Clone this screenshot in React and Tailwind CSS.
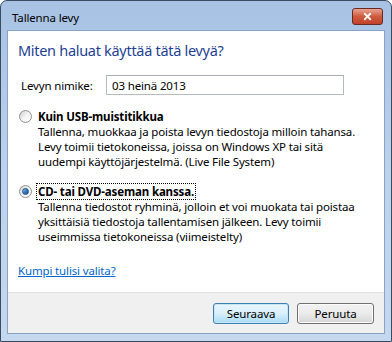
import { X } from 'lucide-react'

const font = { fontFamily: '"Noto Sans", "Open Sans", sans-serif' }

function Radio({ checked }) {
  return (
    <span className="mt-[1px] flex h-[13px] w-[13px] shrink-0 items-center justify-center rounded-full border border-[#8e8f8f] bg-gradient-to-br from-[#d0d0d0] via-[#f4f4f4] to-[#ffffff]">
      {checked && (
        <span className="h-[7px] w-[7px] rounded-full border border-[#1b4f8a] bg-gradient-to-br from-[#8fc3f2] via-[#3979c4] to-[#1a4f8e]" />
      )}
    </span>
  )
}

function Option({ checked, title, lines }) {
  return (
    <div className="flex gap-[5px]">
      <Radio checked={checked} />
      <div className="flex flex-col whitespace-nowrap">
        <span className={`self-start px-[1px] font-bold ${checked ? 'outline outline-1 outline-dotted outline-black' : ''}`}>
          {title}
        </span>
        {lines.map((l) => (
          <span key={l} className="px-[1px]">{l}</span>
        ))}
      </div>
    </div>
  )
}

export default function App() {
  return (
    <div className="h-[342px] w-[392px] bg-white" style={font}>
      <div className="flex h-full w-full flex-col rounded-t-[7px] border border-[#3b4b60] bg-gradient-to-b from-[#a7c2e3] via-[#bcd2ed] to-[#c4d8ef]">
        {/* title bar */}
        <div className="flex h-[29px] shrink-0 items-center justify-between pl-[11px] pr-[8px]">
          <span className="pt-[5px] text-[11.5px] tracking-[-0.15px] text-black">Tallenna levy</span>
          <div className="mt-[1px] flex h-[17px] w-[31px] items-center justify-center rounded-[3px] border border-[#6b2a1f] bg-gradient-to-b from-[#e8a493] via-[#cf5a3e] to-[#c1412a]">
            <X size={11} strokeWidth={4} className="text-white" />
          </div>
        </div>

        {/* client area */}
        <div className="mx-[6px] mb-[7px] flex flex-1 flex-col border border-[#8ba3c2] text-[11.5px] leading-[15px] tracking-[-0.15px] text-black">
          <div className="flex flex-1 flex-col bg-white pl-[10px] pr-[10px]">
            <h1 className="mt-[8px] text-[14.5px] leading-[22px] tracking-[-0.3px] text-[#1e3f94]">Miten haluat käyttää tätä levyä?</h1>

            <div className="mt-[14px] flex items-center">
              <span className="w-[88px] pl-[3px]">Levyn nimike:</span>
              <div className="flex h-[20px] w-[238px] items-center border border-[#b5b9c0] border-t-[#a9acb2] px-[5px]">
                03 heinä 2013
              </div>
            </div>

            <div className="mt-[14px] flex flex-col gap-[15px] pl-[1px]">
              <Option
                title="Kuin USB-muistitikkua"
                lines={[
                  'Tallenna, muokkaa ja poista levyn tiedostoja milloin tahansa.',
                  'Levy toimii tietokoneissa, joissa on Windows XP tai sitä',
                  'uudempi käyttöjärjestelmä. (Live File System)',
                ]}
              />
              <Option
                checked
                title="CD- tai DVD-aseman kanssa."
                lines={[
                  'Tallenna tiedostot ryhminä, jolloin et voi muokata tai poistaa',
                  'yksittäisiä tiedostoja tallentamisen jälkeen. Levy toimii',
                  'useimmissa tietokoneissa (viimeistelty)',
                ]}
              />
            </div>

            <a className="mt-[19px] self-start text-[#0066cc] underline">Kumpi tulisi valita?</a>
          </div>

          <div className="flex h-[41px] shrink-0 items-center justify-end gap-[8px] border-t border-[#dfdfdf] bg-[#f0f0f0] pr-[10px]">
            <button className="h-[21px] w-[76px] rounded-[3px] border border-[#3c7fb1] bg-gradient-to-b from-[#eaf6fd] via-[#d9f0fc] to-[#a7d9f5] shadow-[inset_0_0_0_1px_#c6e6f8]">
              Seuraava
            </button>
            <button className="h-[21px] w-[77px] rounded-[3px] border border-[#707070] bg-gradient-to-b from-[#f2f2f2] via-[#ebebeb] to-[#d5d5d5] shadow-[inset_0_0_0_1px_#fcfcfc]">
              Peruuta
            </button>
          </div>
        </div>
      </div>
    </div>
  )
}
